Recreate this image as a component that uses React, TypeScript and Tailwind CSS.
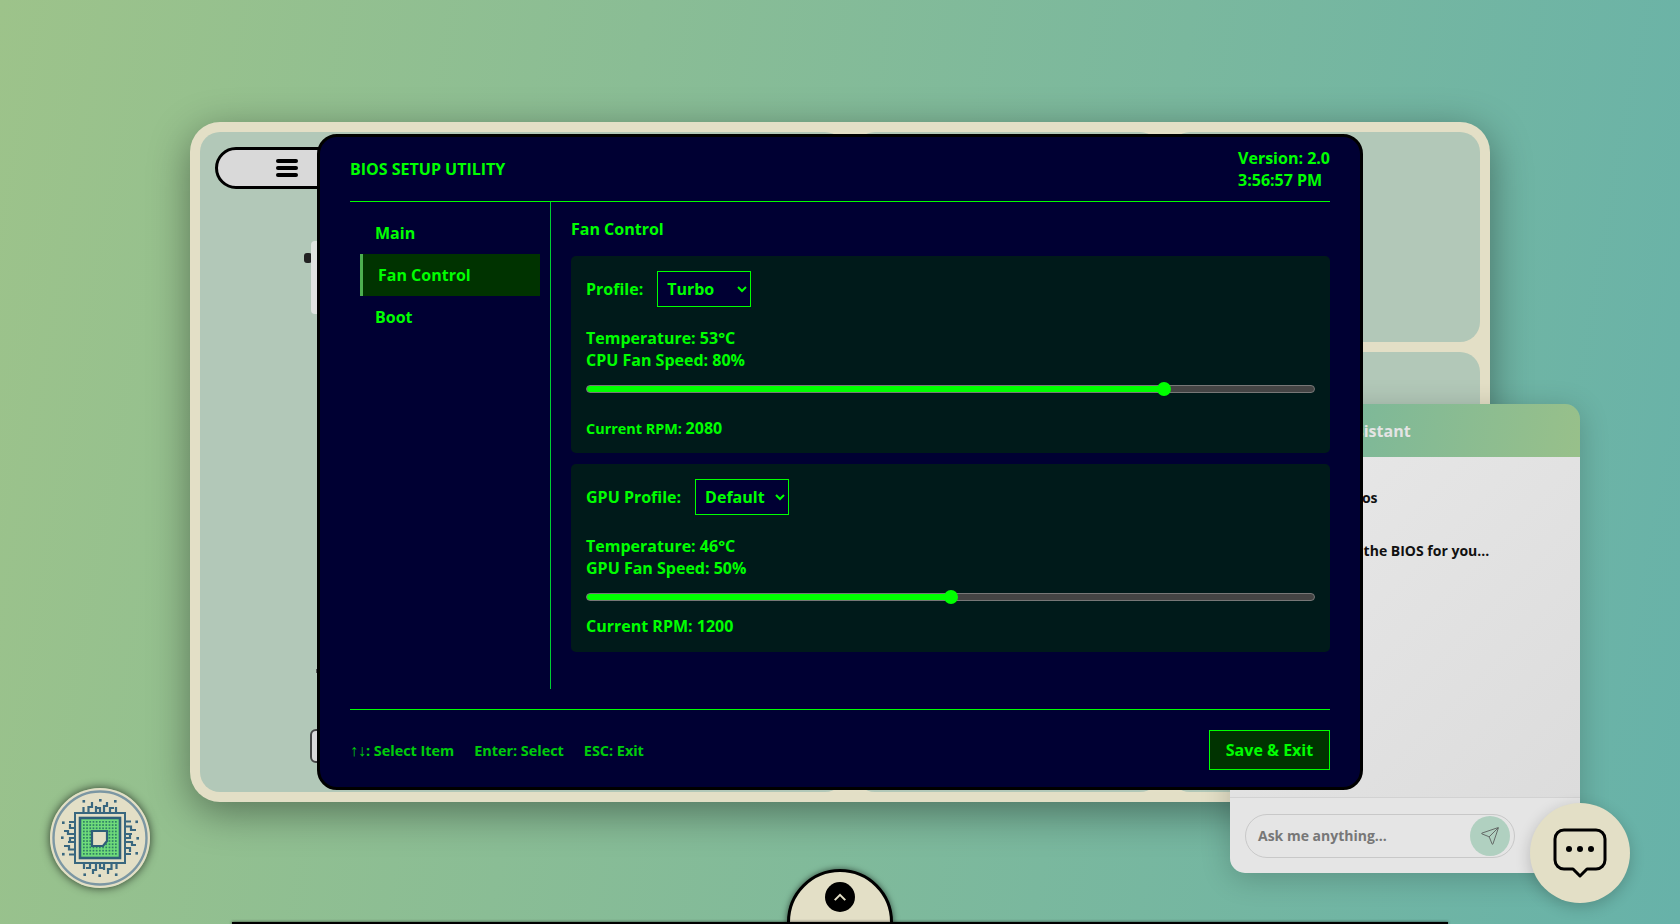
import React from "react";
import { Send } from "lucide-react";

const green = "text-[#00ff00]";

const fans = [
  { label: "Profile:", value: "Turbo", temp: 53, name: "CPU Fan Speed", speed: 80, rpm: 2080, small: true },
  { label: "GPU Profile:", value: "Default", temp: 46, name: "GPU Fan Speed", speed: 50, rpm: 1200, small: false },
];

const ChipLogo = () => {
  const dots: number[] = [];
  for (let i = 0; i < 11; i++) dots.push(i);
  const side = (
    <g>
      <path
        d="M33.5 24V19M38.5 24V19H42V14M46 24V18M50 24V20H46M54 24V18H57V14M60 24V20H64M66 24V19"
        fill="none"
        stroke="#39677f"
        strokeWidth="2.2"
      />
      <rect x="32.5" y="12" width="2.6" height="2.6" fill="#39677f" />
      <rect x="49" y="11" width="2.6" height="2.6" fill="#39677f" />
      <rect x="64" y="12" width="2.6" height="2.6" fill="#39677f" />
    </g>
  );
  return (
    <svg viewBox="0 0 100 100" className="w-full h-full">
      <circle cx="50" cy="50" r="50" fill="#e3dfc6" />
      <circle cx="50" cy="50" r="46.5" fill="none" stroke="#7c97a3" strokeWidth="2.4" />
      {side}
      <g transform="rotate(90 50 50)">{side}</g>
      <g transform="rotate(180 50 50)">{side}</g>
      <g transform="rotate(270 50 50)">{side}</g>
      <rect x="25" y="25" width="50" height="50" fill="#e3dfc6" stroke="#39677f" strokeWidth="2" />
      <rect x="30" y="30" width="40" height="40" fill="#6fdc7a" stroke="#2f5f78" strokeWidth="2.6" />
      {dots.map((r) =>
        dots.map((c) => (
          <rect key={r + "-" + c} x={33 + c * 3.2} y={33 + r * 3.2} width="1.7" height="1.7" fill="#2f7f66" />
        ))
      )}
      <path d="M42 43H57V53L53 58H42Z" fill="#e3dfc6" stroke="#2f5f78" strokeWidth="2.2" />
    </svg>
  );
};

const FanCard = ({ fan }: { fan: (typeof fans)[number] }) => (
  <div className="bg-[#001a1a] rounded-[5px] p-[15px] mb-[11px]">
    <div className="flex items-center gap-[14px]">
      <span>{fan.label}</span>
      <select
        defaultValue={fan.value}
        className="w-[94px] h-[36px] pl-[5px] bg-[#000033] border border-[#00ff00] text-[#00ff00] font-bold"
      >
        <option>Silent</option>
        <option>Default</option>
        <option>Turbo</option>
      </select>
    </div>
    <div className="mt-[20px] leading-[22px]">
      <div>Temperature: {fan.temp}°C</div>
      <div>
        {fan.name}: {fan.speed}%
      </div>
    </div>
    <input
      type="range"
      min={0}
      max={100}
      defaultValue={fan.speed}
      style={{ background: `linear-gradient(to right, #00ff00 ${fan.speed}%, #444444 ${fan.speed}%)` }}
      className="block w-full h-[8px] mt-[14px] appearance-none rounded-[5px] border border-[#777777] [&::-webkit-slider-thumb]:appearance-none [&::-webkit-slider-thumb]:w-[14px] [&::-webkit-slider-thumb]:h-[14px] [&::-webkit-slider-thumb]:rounded-full [&::-webkit-slider-thumb]:bg-[#00ff00]"
    />
    <div className={fan.small ? "mt-[26px] leading-[18px] text-[14.4px]" : "mt-[14px] leading-[22px]"}>
      Current RPM: <span className="text-[16px]">{fan.rpm}</span>
    </div>
  </div>
);

const App = () => {
  return (
    <div className="relative w-[1680px] h-[924px] overflow-hidden pt-[122px] pl-[190px] font-['Open_Sans',sans-serif] bg-[linear-gradient(100deg,#9dc38a,#67b2a9)]">
      {/* Frame with the panels behind the BIOS window */}
      <div className="w-[1300px] h-[680px] p-[10px] rounded-[30px] bg-[#e3dfc6] shadow-[0_10px_40px_rgba(0,0,0,0.4)] grid grid-cols-[645px_305px_310px] gap-[10px]">
        <div className="relative rounded-[20px] bg-[#b2c8b8]">
          <div className="absolute left-[15px] top-[15px] w-[144px] h-[42px] rounded-[21px] border-[3px] border-black bg-[#d9d9d9] flex flex-col items-center justify-center gap-[3px]">
            <span className="block w-[22px] h-[4px] rounded-full bg-black" />
            <span className="block w-[22px] h-[4px] rounded-full bg-black" />
            <span className="block w-[22px] h-[4px] rounded-full bg-black" />
          </div>
          <div className="absolute left-[104px] top-[121px] w-[8px] h-[10px] rounded-[3px] bg-[#222222]" />
          <div className="absolute left-[111px] top-[109px] w-[30px] h-[73px] rounded-[4px] bg-[#dfe3df]" />
          <div className="absolute left-[116px] top-[537px] w-[1px] h-[4px] bg-[#555555]" />
          <div className="absolute left-[110px] top-[597px] w-[40px] h-[34px] rounded-[6px] border-2 border-[#444444] bg-[#d9d9d9]" />
        </div>
        <div className="rounded-[20px] bg-[#b2c8b8]" />
        <div className="flex flex-col gap-[10px]">
          <div className="h-[210px] rounded-[20px] bg-[#b2c8b8]" />
          <div className="flex-1 rounded-[20px] bg-[#b2c8b8]" />
        </div>
      </div>

      {/* Assistant popup, mostly covered by the BIOS window */}
      <div className="absolute left-[1230px] top-[404px] w-[350px] h-[469px] flex flex-col rounded-[15px] overflow-hidden shadow-[0_5px_30px_rgba(0,0,0,0.2)]">
        <div className="h-[53px] flex items-center pl-[65px] font-bold text-[16px] text-[#e4e4e4] bg-[linear-gradient(100deg,#6fb4a0,#98c08a)]">
          BIOS Assistant
        </div>
        <div className="flex-1 pt-[32px] pl-[27px] text-[14px] font-bold text-[#111111] bg-[linear-gradient(135deg,#e8e8e8,#dcdcdc)]">
          <div className="leading-[18px] ml-[10px]">Explain the bios</div>
          <div className="leading-[18px] mt-[35px]">Let me explain the BIOS for you...</div>
        </div>
        <div className="h-[76px] px-[15px] border-t border-[#d2d2d2] bg-[#e5e5e5] flex items-center">
          <div className="w-[270px] h-[44px] rounded-[22px] border border-[#c8c8c8] flex items-center justify-between pl-[12px] pr-[4px]">
            <span className="text-[14px] font-bold text-[#777777]">Ask me anything...</span>
            <span className="w-[40px] h-[40px] rounded-full bg-[#b0d0c0] flex items-center justify-center">
              <Send size={20} strokeWidth={1} className="text-[#555555]" />
            </span>
          </div>
        </div>
      </div>

      {/* BIOS window */}
      <div
        className={`absolute left-[317px] top-[134px] w-[1046px] h-[656px] flex flex-col px-[30px] pt-[10px] rounded-[20px] border-[3px] border-black bg-[#000033] font-bold ${green}`}
      >
        <div className="flex items-center justify-between h-[44px] pb-[10px] border-b border-[#00ff00] box-content">
          <div>BIOS SETUP UTILITY</div>
          <div className="leading-[22px]">
            <div>Version: 2.0</div>
            <div>3:56:57 PM</div>
          </div>
        </div>
        <div className="flex flex-1">
          <div className="w-[201px] pt-[10px] px-[10px] border-r border-[#00cc33]">
            <div className="h-[42px] flex items-center px-[15px]">Main</div>
            <div className="h-[42px] flex items-center px-[15px] border-l-[3px] border-[#4caf50] bg-[#003300]">
              Fan Control
            </div>
            <div className="h-[42px] flex items-center px-[15px]">Boot</div>
          </div>
          <div className="flex-1 pl-[20px] pt-[16px]">
            <div className="leading-[22px] mb-[16px]">Fan Control</div>
            {fans.map((fan) => (
              <FanCard key={fan.name} fan={fan} />
            ))}
          </div>
        </div>
        <div className="mt-[20px] pt-[20px] pb-[17px] border-t border-[#00ff00] flex items-center justify-between">
          <div className="flex gap-[20px] text-[14.4px] leading-[20px] opacity-80 pt-[1px]">
            <span>
              <span className="font-['Liberation_Sans',sans-serif] font-normal text-[16px] leading-[0]">↑↓</span>: Select Item
            </span>
            <span>Enter: Select</span>
            <span>ESC: Exit</span>
          </div>
          <button className="w-[121px] h-[40px] border border-[#00ff00] bg-[#003300] text-[#00ff00] font-bold">
            Save &amp; Exit
          </button>
        </div>
      </div>

      {/* Chat button */}
      <div className="absolute left-[1530px] top-[803px] w-[100px] h-[100px] rounded-full bg-[#e3dfc6] shadow-[0_4px_15px_rgba(0,0,0,0.2)] flex items-center justify-center">
        <svg viewBox="0 0 54 50" className="w-[54px] h-[50px]" fill="none" stroke="black" strokeWidth="3">
          <path d="M11 2H43A9 9 0 0 1 52 11V32A9 9 0 0 1 43 41H34L27 48L20 41H11A9 9 0 0 1 2 32V11A9 9 0 0 1 11 2Z" strokeLinejoin="round" />
          <circle cx="16" cy="21" r="3" fill="black" stroke="none" />
          <circle cx="27" cy="21" r="3" fill="black" stroke="none" />
          <circle cx="38" cy="21" r="3" fill="black" stroke="none" />
        </svg>
      </div>

      {/* Chip logo */}
      <div className="absolute left-[50px] top-[788px] w-[100px] h-[100px] rounded-full shadow-[0_0_10px_rgba(0,0,0,0.7)]">
        <ChipLogo />
      </div>

      {/* Bottom drawer and its handle */}
      <div className="absolute left-[787px] top-[869px] w-[106px] h-[106px] rounded-full border-[3px] border-black bg-[#e3dfc6] shadow-[0_0_6px_rgba(0,0,0,0.6)] flex justify-center pt-[10px]">
        <span className="w-[30px] h-[30px] rounded-full bg-black flex items-center justify-center">
          <svg viewBox="0 0 16 10" className="w-[14px] h-[9px]" fill="none" stroke="#e3dfc6" strokeWidth="2.4">
            <path d="M2 8L8 2L14 8" />
          </svg>
        </span>
      </div>
      <div className="absolute left-[232px] top-[922px] w-[1216px] h-[2px] bg-black shadow-[0_0_3px_rgba(0,0,0,0.8)]" />
    </div>
  );
};

export default App;
